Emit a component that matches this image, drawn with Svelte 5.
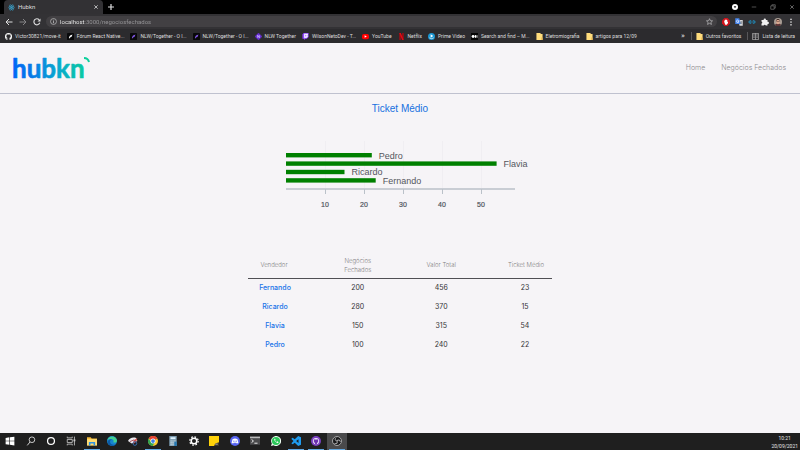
<script>
  const bookmarks = [
    { icon: 'github', label: 'Victor30821/move-it' },
    { icon: 'rocket', label: 'Fórum React Native...' },
    { icon: 'rocketPurple', label: 'NLW/Together - O I...' },
    { icon: 'rocketPurple', label: 'NLW/Together - O I...' },
    { icon: 'nlw', label: 'NLW Together' },
    { icon: 'twitch', label: 'WilsonNetoDev - T...' },
    { icon: 'youtube', label: 'YouTube' },
    { icon: 'netflix', label: 'Netflix' },
    { icon: 'prime', label: 'Prime Video' },
    { icon: 'medium', label: 'Search and find – M...' },
    { icon: 'folder', label: 'Eletromiografia' },
    { icon: 'folder', label: 'artigos para 12/09' }
  ];

  const extensions = [
    { icon: 'adblock', label: 'Bloqueador' },
    { icon: 'translate', label: 'Tradutor' },
    { icon: 'react', label: 'React' },
    { icon: 'puzzle', label: 'Extensões' },
    { icon: 'avatar', label: 'Perfil' },
    { icon: 'dots', label: 'Menu' }
  ];

  const apps = [
    { icon: 'windows', label: 'Iniciar' },
    { icon: 'search', label: 'Pesquisar' },
    { icon: 'cortana', label: 'Cortana' },
    { icon: 'tasks', label: 'Visão de tarefas' },
    { icon: 'explorer', label: 'Explorador', open: true },
    { icon: 'edge', label: 'Edge' },
    { icon: 'snip', label: 'Captura' },
    { icon: 'chrome', label: 'Chrome', open: true },
    { icon: 'calc', label: 'Calculadora' },
    { icon: 'gear', label: 'Configurações' },
    { icon: 'notes', label: 'Notas' },
    { icon: 'discord', label: 'Discord' },
    { icon: 'terminal', label: 'Terminal' },
    { icon: 'whatsapp', label: 'WhatsApp' },
    { icon: 'vscode', label: 'VS Code', open: true },
    { icon: 'desktop', label: 'GitHub Desktop', open: true },
    { icon: 'obs', label: 'OBS', open: true, active: true }
  ];

  const sellers = [
    { name: 'Fernando', deals: 200, total: 456, ticket: 23 },
    { name: 'Ricardo', deals: 280, total: 370, ticket: 15 },
    { name: 'Flavia', deals: 150, total: 315, ticket: 54 },
    { name: 'Pedro', deals: 100, total: 240, ticket: 22 }
  ];

  const bars = [...sellers].reverse();
  const ticks = [10, 20, 30, 40, 50];
  const unit = 3.9;
</script>

{#snippet icon(name)}
  <svg class="icon" viewBox="0 0 16 16" aria-hidden="true">
    {#if name === 'react'}
      <g fill="none" stroke="#3b9dc4" stroke-width="1.3">
        <ellipse cx="8" cy="8" rx="7.2" ry="2.8" />
        <ellipse cx="8" cy="8" rx="7.2" ry="2.8" transform="rotate(60 8 8)" />
        <ellipse cx="8" cy="8" rx="7.2" ry="2.8" transform="rotate(120 8 8)" />
      </g>
      <circle cx="8" cy="8" r="1.6" fill="#3b9dc4" />
    {:else if name === 'code'}
      <path d="M0 8l4-4h3L4 8l3 4H4zM16 8l-4-4H9l3 4-3 4h3zM4 7h8v2H4z" fill="#24779c" />
    {:else if name === 'close'}
      <path d="M3.5 3.5l9 9m0-9l-9 9" stroke="currentColor" stroke-width="2" />
    {:else if name === 'plus'}
      <path d="M8 2v12M2 8h12" stroke="currentColor" stroke-width="2.4" />
    {:else if name === 'update'}
      <circle cx="8" cy="8" r="8" fill="#fff" />
      <path d="M4.5 6h7L8 11z" fill="#111" />
    {:else if name === 'minimize'}
      <path d="M2 8h12" stroke="currentColor" stroke-width="1.6" />
    {:else if name === 'restore'}
      <path d="M2 5h9v9H2zM5 5V2h9v9h-3" fill="none" stroke="currentColor" stroke-width="1.6" />
    {:else if name === 'back'}
      <path d="M15 8H2m6-6L2 8l6 6" fill="none" stroke="currentColor" stroke-width="2" />
    {:else if name === 'forward'}
      <path d="M1 8h13M8 2l6 6-6 6" fill="none" stroke="currentColor" stroke-width="2" />
    {:else if name === 'reload'}
      <path d="M13.5 9.5a6 6 0 1 1-1.3-6" fill="none" stroke="currentColor" stroke-width="2.3" />
      <path d="M15 1v6H9z" fill="currentColor" />
    {:else if name === 'info'}
      <circle cx="8" cy="8" r="6.8" fill="none" stroke="currentColor" stroke-width="1.5" />
      <path d="M8 7v5M8 4v1.8" stroke="currentColor" stroke-width="1.8" />
    {:else if name === 'star'}
      <path d="M8 1.5l2 4.6 5 .4-3.8 3.3 1.2 4.9L8 12.1l-4.400 2.600 1.200-4.900L1 6.500l5-.4z" fill="none" stroke="currentColor" stroke-width="1.5" />
    {:else if name === 'adblock'}
      <path d="M5 0h6l5 5v6l-5 5H5l-5-5V5z" fill="#d0141c" />
      <path d="M4.500 8V5h1.500V3.500h1.500V3H9v1h1.500v4L12 7v3l-2.500 3.500h-3z" fill="#fff" />
    {:else if name === 'translate'}
      <path d="M7 4h8.500v11.500H9z" fill="#d5d8dc" />
      <path d="M.5.5h8l3 11.500h-11z" fill="#4484ed" />
      <path d="M7.500 5.500A2.500 2.500 0 1 0 7.800 7H5.500" fill="none" stroke="#fff" stroke-width="1.400" />
      <path d="M10.500 8h4m-2-1.500V8c0 2-1 3-2 4m1-3l2.500 3" stroke="#5a6068" fill="none" />
    {:else if name === 'puzzle'}
      <path d="M1 4h4.500a2.200 2.200 0 1 1 4.200 0H13v3.700a2.200 2.200 0 1 1 0 4.200V15H9.500a2.200 2.200 0 0 0-4.200 0H1v-3.800a2.200 2.200 0 0 0 0-4.200z" fill="#f0f0f0" />
    {:else if name === 'avatar'}
      <circle cx="8" cy="8" r="8" fill="#a99d94" />
      <path d="M2 14c1-4 11-4 12 0a8 8 0 0 1-12 0z" fill="#5b3335" />
      <ellipse cx="8" cy="7.500" rx="3.700" ry="5" fill="#d9a58d" />
      <path d="M3.800 7C3 0 13 0 12.200 7l-1.500-3H5.500z" fill="#2b1b18" />
      <path d="M5 7h2.500m1 0H11" stroke="#2b1b18" />
    {:else if name === 'dots'}
      <g fill="#d8d8d8"><circle cx="8" cy="2.500" r="1.700" /><circle cx="8" cy="8" r="1.700" /><circle cx="8" cy="13.500" r="1.700" /></g>
    {:else if name === 'github'}
      <circle cx="8" cy="8" r="8" fill="#fff" />
      <path d="M5.500 16v-2.500c-2 .4-2.600-.8-3.200-1.600 1.500-.2 1.700 1.200 3.300.6.1-.6.300-1 .6-1.200C2.500 10.500 2.500 6 4 5c-.2-.8-.2-1.500.1-2.200 1 0 1.700.6 2.200.9a8 8 0 0 1 3.600 0c.5-.3 1.200-.9 2.200-.9.3.7.300 1.400.1 2.200 1.500 1 1.500 5.500-2.400 6.300.500.5.700 1 .7 2V16z" fill="#2c2b2e" />
    {:else if name === 'rocket' || name === 'rocketPurple'}
      <rect width="16" height="16" rx="1" fill="#08080a" />
      <path d="M4.500 13V9.500L7 5.500l5.500-2-2 5-3.500 1.500z" fill={name === 'rocket' ? '#fff' : '#8257e6'} />
    {:else if name === 'nlw'}
      <path d="M8 0l8 8-8 8-8-8z" fill="#6a31d7" stroke="#6a31d7" />
      <path d="M6 11V5l4 6V5" fill="none" stroke="#d7c7ff" stroke-width="1.500" />
    {:else if name === 'twitch'}
      <path d="M1 3l3-3h11v9l-4 4H8l-3 3v-3H1z" fill="#9146ff" />
      <path d="M5 1.500h8.500v7L11 11H8l-2 1.700V11H5z" fill="#fff" />
      <path d="M8 4v4m3.500-4v4" stroke="#9146ff" stroke-width="1.500" />
    {:else if name === 'youtube'}
      <rect y="2" width="16" height="12" rx="4" fill="#f00" />
      <path d="M6 5l5 3-5 3z" fill="#fff" />
    {:else if name === 'netflix'}
      <path d="M3 0h3.500v16H3zM9.500 0H13v16H9.500z" fill="#a80912" />
      <path d="M3 0h3.500L13 16H9.500z" fill="#e50914" />
    {:else if name === 'prime'}
      <circle cx="8" cy="8" r="8" fill="#1896d3" />
      <path d="M6 3l6 4-6 4z" fill="#fff" />
      <path d="M3 11c3 2.500 7 2.500 10 0" fill="none" stroke="#fff" stroke-width="1.500" />
    {:else if name === 'medium'}
      <rect width="16" height="16" fill="#050505" />
      <circle cx="4.800" cy="8" r="3.400" fill="#fff" /><ellipse cx="10.500" cy="8" rx="2" ry="3.300" fill="#fff" /><path d="M14 5v6" stroke="#fff" stroke-width="1.500" />
    {:else if name === 'folder'}
      <path d="M1 0h9l1 2h4v14H1z" fill="#ffdc7c" />
      <path d="M12 10h3v6h-3z" fill="#e8b954" />
    {:else if name === 'list'}
      <path d="M1 1h14v14H1zM8 1v14M3 4h3M3 7h3m-3 3h3m4-6h3m-3 3h3m-3 3h3" fill="none" stroke="#c9c9c9" stroke-width="1.400" />
    {:else if name === 'windows'}
      <path d="M1 3l6-1v5.500H1zM8 1.900L15 1v6.500H8zM1 8.500h6V14l-6-1zM8 8.500h7V15l-7-.9z" fill="#fff" />
    {:else if name === 'search'}
      <circle cx="9.500" cy="6" r="4.500" fill="none" stroke="#ddd" stroke-width="1.400" />
      <path d="M6.500 9.500L2 15" stroke="#ddd" stroke-width="1.500" />
    {:else if name === 'cortana'}
      <circle cx="8" cy="8" r="5.500" fill="none" stroke="#fff" stroke-width="2" />
    {:else if name === 'tasks'}
      <path d="M2 5.500h8v5H2zM2 1v2h8V1M2 15v-2h8v2M13.500 1v14" fill="none" stroke="#ccc" stroke-width="1.300" />
      <path d="M12 5.500h3v3h-3z" fill="#ccc" />
    {:else if name === 'explorer'}
      <path d="M0 2h6l1.500 2H16v11H0z" fill="#f3b93b" />
      <path d="M0 5h16v10H0z" fill="#ffdc72" />
      <path d="M3 15V9.500h10V15h-2.500v-3h-5v3z" fill="#2f92df" />
    {:else if name === 'edge'}
      <circle cx="8" cy="8" r="8" fill="#1684cf" />
      <path d="M.5 7C2-2 15-1 16 7c0 4-4 4-6 3 1-2 1-4-2-5C5 4 1.500 5 .5 7z" fill="#44cf91" />
      <path d="M5 8c-1 5 4 7 8.500 5.500C10 18 2 16 1 9.500 1 5.500 7 4 9 7 7 6 5.500 6.500 5 8z" fill="#0c59a4" />
    {:else if name === 'snip'}
      <path d="M0 8c2-5 8-7 13-5l2 5-9 4z" fill="#eceaf0" />
      <path d="M9 7l6-4-2 6-5 4z" fill="#d64842" />
      <circle cx="11" cy="12" r="3" fill="none" stroke="#346fb2" stroke-width="1.500" />
      <path d="M3 9l7-3" stroke="#a4545e" stroke-width="1.500" />
    {:else if name === 'chrome'}
      <circle cx="8" cy="8" r="8" fill="#f9c92f" />
      <path d="M8 8L1 4a8 8 0 0 1 14 0z" fill="#e44134" />
      <path d="M1 4a8 8 0 0 0 6.500 12L11 9.500 5 10z" fill="#32a350" />
      <circle cx="8" cy="8" r="4" fill="#fff" /><circle cx="8" cy="8" r="3" fill="#3c7ee8" />
    {:else if name === 'calc'}
      <path d="M2 0h12v16H2z" fill="#7898ad" /><path d="M4 2h8v3H4z" fill="#dff3ff" />
      <path d="M4 8h8M4 11h8M4 14h8" stroke="#d9e7ee" stroke-width="1.800" stroke-dasharray="2 1" />
      <path d="M10 9h4v7h-4z" fill="#2677af" />
    {:else if name === 'gear'}
      <circle cx="8" cy="8" r="4.500" fill="none" stroke="#fff" stroke-width="2.500" />
      <circle cx="8" cy="8" r="6.700" fill="none" stroke="#fff" stroke-width="2" stroke-dasharray="2.600 2.660" />
    {:else if name === 'notes'}
      <path d="M0 0h16v16H0z" fill="#ffd20a" /><path d="M16 10v6H8l2-4z" fill="#3b3527" /><path d="M10 13h4" stroke="#fff" />
    {:else if name === 'discord'}
      <circle cx="8" cy="8" r="8" fill="#5865f2" />
      <path d="M4 5c3-1.500 5-1.500 8 0l1.500 6-2.500 1-1-1.300H6L5 12l-2.500-1z" fill="#fff" />
      <circle cx="6.200" cy="8.300" r="1" fill="#5865f2" /><circle cx="9.800" cy="8.300" r="1" fill="#5865f2" />
    {:else if name === 'terminal'}
      <path d="M0 1h16v13H0z" fill="#4a4a4c" /><path d="M0 1h16v2.500H0z" fill="#b9b9b9" />
      <path d="M2.500 5.500L5.500 8l-3 2.500M7 11.500h5" fill="none" stroke="#fff" stroke-width="1.400" />
    {:else if name === 'whatsapp'}
      <path d="M0 16l1.300-4A8 8 0 1 1 4 14.800z" fill="#f2fff5" />
      <circle cx="8" cy="8" r="6.500" fill="#2dc85a" />
      <path d="M5.500 4.500c-1.500 2 2.500 7 5.500 6.500 1-.5 1-1.300.8-1.600L10 8.500l-1 1C8 9 7 8 6.600 7l.7-1-.8-1.700z" fill="#fff" />
    {:else if name === 'vscode'}
      <path fill-rule="evenodd" d="M11.500 0L16 2v12l-4.500 2L6 10.800l-3.300 2.500L1 12.300V11l3-3-3-3V3.700l1.700-1L6 5.200zM12 5L8.200 8l3.800 3z" fill="#1f9cf0" />
    {:else if name === 'desktop'}
      <circle cx="8" cy="8" r="8" fill="#7a3fc0" /><circle cx="8" cy="8" r="5" fill="#f2ebfb" />
      <path d="M4.500 5l2 .5h3l2-.5v4.500L9.500 11v2h-3v-2L4.500 9.500z" fill="#6a32ad" />
    {:else if name === 'obs'}
      <circle cx="8" cy="8" r="7.200" fill="#19191b" stroke="#c9c9cb" stroke-width="1.200" />
      <g fill="none" stroke="#a9a9ab" stroke-width="1.500"><path d="M8 8c-3 0-4-3-1.500-5.500" /><path d="M8 8c-3 0-4-3-1.500-5.500" transform="rotate(120 8 8)" /><path d="M8 8c-3 0-4-3-1.500-5.500" transform="rotate(240 8 8)" /></g>
    {/if}
  </svg>
{/snippet}

<div class="screen">
  <header class="browser">
    <div class="tabs">
      <div class="tab">
        {@render icon('react')}
        <span>Hubkn</span>
        <button class="close" aria-label="Fechar guia">{@render icon('close')}</button>
      </div>
      <button aria-label="Nova guia">{@render icon('plus')}</button>
      <div class="window">
        <button aria-label="Atualizar">{@render icon('update')}</button>
        <button aria-label="Minimizar">{@render icon('minimize')}</button>
        <button aria-label="Restaurar">{@render icon('restore')}</button>
        <button aria-label="Fechar">{@render icon('close')}</button>
      </div>
    </div>

    <div class="toolbar">
      <div class="history">
        <button aria-label="Voltar">{@render icon('back')}</button>
        <button class="muted" aria-label="Avançar">{@render icon('forward')}</button>
        <button aria-label="Recarregar">{@render icon('reload')}</button>
      </div>
      <div class="address">
        {@render icon('info')}
        <input aria-label="Endereço" value="localhost:3000/negociosfechados" />
        <button aria-label="Favoritar">{@render icon('star')}</button>
      </div>
      <div class="extensions">
        {#each extensions as item}
          <button aria-label={item.label}>{@render icon(item.icon === 'react' ? 'code' : item.icon)}</button>
        {/each}
      </div>
    </div>

    <nav class="bookmarks" aria-label="Favoritos">
      <div class="saved">
        {#each bookmarks as item}
          <a href="#favorito">{@render icon(item.icon)}<span>{item.label}</span></a>
        {/each}
      </div>
      <div class="others">
        <button class="more" aria-label="Mais favoritos">»</button>
        <a class="split" href="#outros">{@render icon('folder')}<span>Outros favoritos</span></a>
        <a class="split" href="#lista">{@render icon('list')}<span>Lista de leitura</span></a>
      </div>
    </nav>
  </header>

  <div class="page">
    <header class="site">
      <a class="logo" href="#home" aria-label="hubkn">
        <svg width="80" height="28" viewBox="0 0 80 28">
          <defs>
            <linearGradient id="brand" gradientUnits="userSpaceOnUse" x1="0" y1="0" x2="74" y2="0">
              <stop offset="0" stop-color="#0068f5" />
              <stop offset="0.25" stop-color="#087be8" />
              <stop offset="0.6" stop-color="#08a9ce" />
              <stop offset="1" stop-color="#0bcf9b" />
            </linearGradient>
          </defs>
          <text x="-2" y="24">hubkn</text>
          <path d="M70 4q4 0 5 4" />
        </svg>
      </a>
      <nav>
        <a href="#home">Home</a>
        <a href="#negocios">Negócios Fechados</a>
      </nav>
    </header>

    <main>
      <h1>Ticket Médio</h1>
      <svg class="chart" width="260" height="80" viewBox="0 0 260 80" role="img" aria-label="Ticket médio por vendedor">
        {#each ticks as tick}
          <path class="guide" d="M{tick * unit + 0.5} 5v47" />
          <path class="axis" d="M{tick * unit + 0.5} 53v5" />
          <text class="tick" x={tick * unit} y="71">{tick}</text>
        {/each}
        {#each bars as bar, i}
          <rect x="0" y={17 + i * 8.4} width={bar.ticket * unit} height="4.400" />
          <text class="name" x={bar.ticket * unit + 7} y={22.5 + i * 8.4}>{bar.name}</text>
        {/each}
        <path class="axis base" d="M0 53h229" />
      </svg>

      <table>
        <thead>
          <tr><th>Vendedor</th><th>Negócios<br />Fechados</th><th>Valor Total</th><th>Ticket Médio</th></tr>
        </thead>
        <tbody>
          {#each sellers as seller}
            <tr>
              <td>{seller.name}</td><td>{seller.deals}</td><td>{seller.total}</td><td>{seller.ticket}</td>
            </tr>
          {/each}
        </tbody>
      </table>
    </main>
  </div>

  <footer class="taskbar">
    <div class="apps">
      {#each apps as app}
        <button class:open={app.open} class:active={app.active} aria-label={app.label}>{@render icon(app.icon)}</button>
      {/each}
    </div>
    <div class="clock"><span>10:21</span><span>20/09/2021</span></div>
  </footer>
</div>

<style>
  .screen {
    display: flex;
    flex-direction: column;
    min-height: 100vh;
    background: #f6f4f7;
    font-family: Roboto, sans-serif;
  }
  .screen * { box-sizing: border-box; }
  button {
    display: flex;
    align-items: center;
    justify-content: center;
    padding: 0;
    border: 0;
    background: none;
    color: inherit;
    font: inherit;
  }
  a { color: inherit; text-decoration: none; }
  .icon { display: block; flex: none; width: 8px; height: 8px; }

  .browser { color: #dededf; font-size: 6px; line-height: 8px; }
  .tabs {
    display: flex;
    align-items: center;
    gap: 4px;
    height: 14px;
    padding: 0 5px 0 4px;
    background: #000;
  }
  .tab {
    display: flex;
    align-items: center;
    gap: 3px;
    width: 99px;
    height: 14px;
    padding: 0 4px;
    border-radius: 4px 4px 0 0;
    background: #323134;
  }
  .tab .icon { width: 7px; height: 7px; }
  .close { margin-left: auto; }
  .tab .close .icon { width: 6px; height: 6px; }
  .window { display: flex; gap: 13px; margin-left: auto; color: #858585; }
  .window .icon { width: 6px; height: 6px; }

  .toolbar {
    display: flex;
    align-items: center;
    gap: 5px;
    height: 15px;
    padding: 0 5px;
    background: #333235;
  }
  .history { display: flex; gap: 6px; }
  .history .icon { width: 8px; height: 8px; }
  .muted { color: #858487; }
  .address {
    display: flex;
    flex: 1;
    align-items: center;
    gap: 3px;
    height: 11px;
    padding: 0 4px;
    border-radius: 6px;
    background: #424043;
    color: #c5c5c6;
  }
  .address .icon { width: 7px; height: 7px; }
  .address input {
    flex: 1;
    min-width: 0;
    height: 10px;
    padding: 0;
    border: 0;
    outline: 0;
    background: linear-gradient(90deg, #f4f4f4 25px, #99989b 25px);
    background-clip: text;
    color: transparent;
    font: inherit;
  }
  .extensions { display: flex; gap: 5px; }

  .bookmarks {
    display: flex;
    justify-content: space-between;
    align-items: center;
    height: 14px;
    padding: 0 5px;
    background: #2c2b2e;
    font-size: 5px;
    white-space: nowrap;
  }
  .saved, .others { display: flex; align-items: center; gap: 6px; }
  .bookmarks a { display: flex; align-items: center; gap: 3px; }
  .bookmarks .icon { width: 7px; height: 7px; }
  .more { font-size: 8px; }
  .split { padding-left: 4px; border-left: 1px solid #58575a; }

  .page { flex: 1; }
  .site {
    display: flex;
    align-items: center;
    justify-content: space-between;
    height: 51px;
    padding: 0 14px;
    border-bottom: 1px solid #bfc1cf;
  }
  .logo svg { display: block; overflow: visible; }
  .logo text {
    fill: url(#brand);
    stroke: url(#brand);
    stroke-width: 0.6;
    stroke-linejoin: round;
    font-family: Lato, sans-serif;
    font-size: 26px;
    font-weight: 700;
  }
  .logo path { fill: none; stroke: #0bcf9b; stroke-width: 2; }
  .site nav {
    display: flex;
    gap: 16px;
    color: #8f8e91;
    font: 300 7px/10px Inter, sans-serif;
  }

  main { display: flex; flex-direction: column; align-items: center; padding-top: 9px; }
  h1 {
    margin: 0;
    color: #1570df;
    font: 400 10px/12px "Liberation Sans", Arial, sans-serif;
  }
  .chart { margin: 21px 0 36px 31px; overflow: visible; }
  .chart rect { fill: #008000; }
  .guide { stroke: #f0eef2; }
  .axis { fill: none; stroke: #bac1c9; }
  .base { stroke-width: 1.5; }
  .chart text { font-family: "Liberation Sans", Arial, sans-serif; }
  .name { fill: #55565d; font-size: 9px; }
  .tick {
    fill: #50555d;
    stroke: #50555d;
    stroke-width: 0.2;
    font-size: 7px;
    text-anchor: middle;
  }

  table {
    width: 38%;
    border-collapse: collapse;
    table-layout: fixed;
    font: 400 7px/10px Inter, sans-serif;
    color: #333236;
    text-align: center;
  }
  th {
    height: 26px;
    padding: 0;
    border-bottom: 1px solid #504f54;
    color: #7f7e81;
    font-size: 6px;
    line-height: 9px;
    font-weight: 300;
    white-space: nowrap;
  }
  td { height: 19px; padding: 0; }
  th:first-child, td:first-child { width: 68px; padding-right: 16px; }
  th:last-child { width: 69px; padding-left: 17px; }
  td:last-child { padding-left: 15px; }
  td:first-child { padding-right: 14px; color: #1673e8; font-weight: 500; }

  .taskbar {
    display: flex;
    justify-content: space-between;
    height: 17px;
    background: #1f1f1f;
  }
  .apps { display: grid; grid-template-columns: repeat(17, 1fr); width: 347px; }
  .apps .icon { width: 10px; height: 10px; }
  .apps button { border-bottom: 1px solid transparent; }
  .apps .open {
    background: linear-gradient(#62a9e4, #62a9e4) bottom / 16px 1px no-repeat;
    background-origin: border-box;
  }
  .apps .active { background-color: #4a4a4c; }
  .clock {
    display: flex;
    flex-direction: column;
    align-items: center;
    justify-content: center;
    padding-right: 2px;
    color: #e6e6e6;
    font-size: 5px;
    line-height: 8px;
  }
</style>
